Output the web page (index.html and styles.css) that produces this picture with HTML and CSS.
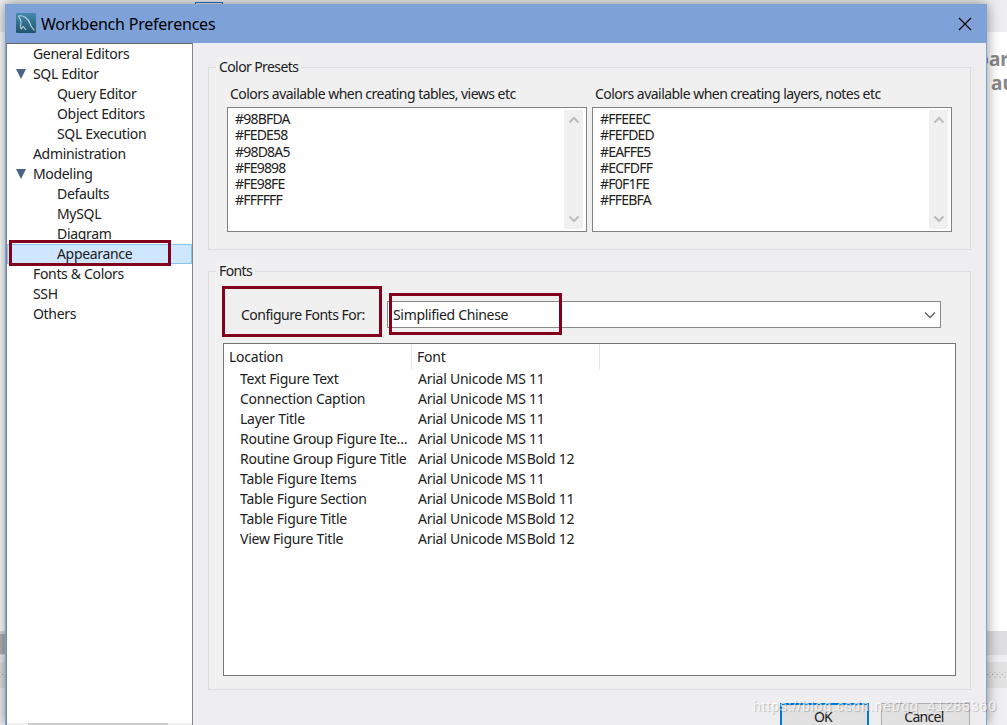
FILE: index.html
```
<!DOCTYPE html>
<html lang="en">
<head>
<meta charset="utf-8">
<title>Workbench Preferences</title>
<link rel="stylesheet" href="styles.css">
</head>
<body>
<div class="backdrop">
  <div class="back-top"></div>
  <div class="back-focus"></div>
  <div class="back-text"><div>oar</div><div class="second">au</div></div>
  <div class="back-bar dark"></div>
  <div class="back-bar dotted"></div>
  <div class="back-bar base"></div>
</div>
<div class="window">
  <header class="titlebar">
    <svg class="logo" width="20" height="20" viewBox="0 0 20 20">
      <defs><linearGradient id="sea" x2="0" y2="1"><stop stop-color="#438aad"/><stop offset="1" stop-color="#23536d"/></linearGradient></defs>
      <rect width="20" height="20" rx="1" fill="url(#sea)"/>
      <path d="M2.500 3C7 1.800 12 5 14 10.500L15 13L18.500 17.500M2.500 3C3 5 4.500 6 5 8.500C5.300 11 3.800 13 5 15.500C6 17 6 13.500 7.200 13.500L10 17" fill="none" stroke="#bdd5df" stroke-width="1.100"/>
    </svg>
    <h1>Workbench Preferences</h1>
    <svg class="close" width="14" height="14" viewBox="0 0 14 14"><path d="M1 1L13 13M13 1L1 13" stroke="#000" stroke-width="1.200"/></svg>
  </header>
  <div class="body">
    <nav class="tree">
      <ul>
        <li>General Editors</li>
        <li class="open">SQL Editor</li>
        <li class="child">Query Editor</li>
        <li class="child">Object Editors</li>
        <li class="child">SQL Execution</li>
        <li>Administration</li>
        <li class="open">Modeling</li>
        <li class="child">Defaults</li>
        <li class="child">MySQL</li>
        <li class="child">Diagram</li>
        <li class="child selected">Appearance</li>
        <li>Fonts &amp; Colors</li>
        <li>SSH</li>
        <li>Others</li>
      </ul>
      <div class="hscroll"><i></i></div>
    </nav>
    <main>
      <section class="group presets">
        <h2>Color Presets</h2>
        <div class="columns">
          <div class="column">
            <label>Colors available when creating tables, views etc</label>
            <div class="list">
              <div class="colors"><p>#98BFDA</p><p>#FEDE58</p><p>#98D8A5</p><p>#FE9898</p><p>#FE98FE</p><p>#FFFFFF</p></div>
              <div class="scroll">
                <svg width="12" height="8" viewBox="0 0 12 8"><path d="M1.500 6.500L6 2L10.500 6.500" /></svg>
                <svg width="12" height="8" viewBox="0 0 12 8"><path d="M1.500 1.500L6 6L10.500 1.500" /></svg>
              </div>
            </div>
          </div>
          <div class="column">
            <label>Colors available when creating layers, notes etc</label>
            <div class="list">
              <div class="colors"><p>#FFEEEC</p><p>#FEFDED</p><p>#EAFFE5</p><p>#ECFDFF</p><p>#F0F1FE</p><p>#FFEBFA</p></div>
              <div class="scroll">
                <svg width="12" height="8" viewBox="0 0 12 8"><path d="M1.500 6.500L6 2L10.500 6.500" /></svg>
                <svg width="12" height="8" viewBox="0 0 12 8"><path d="M1.500 1.500L6 6L10.500 1.500" /></svg>
              </div>
            </div>
          </div>
        </div>
      </section>
      <section class="group fonts">
        <h2>Fonts</h2>
        <div class="picker">
          <label>Configure Fonts For:</label>
          <div class="combo"><span>Simplified Chinese</span>
            <svg width="12" height="8" viewBox="0 0 12 8"><path d="M1 1.500L6 6.500L11 1.500" /></svg>
          </div>
        </div>
        <div class="table">
          <div class="row head"><span>Location</span><span>Font</span></div>
          <div class="row"><span>Text Figure Text</span><span>Arial Unicode MS 11</span></div>
          <div class="row"><span>Connection Caption</span><span>Arial Unicode MS 11</span></div>
          <div class="row"><span>Layer Title</span><span>Arial Unicode MS 11</span></div>
          <div class="row"><span>Routine Group Figure Ite...</span><span>Arial Unicode MS 11</span></div>
          <div class="row"><span>Routine Group Figure Title</span><span>Arial Unicode MS<b></b>Bold 12</span></div>
          <div class="row"><span>Table Figure Items</span><span>Arial Unicode MS 11</span></div>
          <div class="row"><span>Table Figure Section</span><span>Arial Unicode MS<b></b>Bold 11</span></div>
          <div class="row"><span>Table Figure Title</span><span>Arial Unicode MS<b></b>Bold 12</span></div>
          <div class="row"><span>View Figure Title</span><span>Arial Unicode MS<b></b>Bold 12</span></div>
        </div>
      </section>
      <footer><button class="primary">OK</button><button>Cancel</button></footer>
    </main>
  </div>
</div>
<div class="mark mark-tree"></div>
<div class="mark mark-label"></div>
<div class="mark mark-value"></div>
<div class="watermark">https://blog.csdn.net/qq_41285360</div>
</body>
</html>
```
FILE: styles.css
```
* { box-sizing: border-box; }
body { margin: 0; width: 1007px; height: 725px; overflow: hidden; position: relative; background: #fff; color: #202020; font: 14px/20px "Noto Sans", sans-serif; }
h1, h2, p, ul { margin: 0; padding: 0; font-weight: normal; list-style: none; }

.backdrop { position: absolute; inset: 0; overflow: hidden; }
.back-top { height: 32px; background: #eeeef0; }
.back-focus { position: absolute; left: 195px; top: 2px; width: 28px; height: 10px; border: 1px solid #1979ca; }
.back-text { position: absolute; left: 977px; top: 47px; color: #888; font: bold 19px/24px "Noto Sans", sans-serif; }
.back-text .second { margin-left: 14px; }
.back-bar { position: absolute; left: 0; width: 100%; }
.dark { top: 631px; height: 24px; background: #dedee0; }
.dark::before { content: ""; display: block; width: 6px; height: 20px; margin-top: 3px; background: #b5b5b5; }
.dotted { top: 655px; height: 33px; background: #e2e2e2; border-top: 7px solid #f0f0f2; }
.dotted::after { content: ""; display: block; height: 7px; margin-top: 10px; background: radial-gradient(circle, #999 0.8px, transparent 1px) 0 0 / 5px 5px, radial-gradient(circle, #999 0.8px, transparent 1px) 2.5px 2.5px / 5px 5px; }
.base { top: 688px; height: 37px; background: #f0f0f2; }

.window { position: relative; width: 982px; height: 721px; margin: 4px 0 0 5px; display: flex; flex-direction: column; background: #eeeef0; border: solid #7ea1d7; border-width: 0 1px; box-shadow: 0 0 12px rgba(0,0,0,.45); }
.titlebar { height: 39px; background: #7ea1d7; display: flex; align-items: center; padding: 0 14px 0 10px; }
.titlebar h1 { flex: 1; margin-left: 5px; font-size: 16px; letter-spacing: -.22px; color: #000; }
.logo { margin-top: -1px; }
.body { flex: 1; min-height: 0; display: flex; }
.tree { width: 187px; margin-right: 1px; border: 1px solid #83858c; border-top-color: #666; border-bottom: 0; background: #fff; display: flex; flex-direction: column; justify-content: space-between; }
.tree li { height: 20px; padding-left: 26px; line-height: 20px; position: relative; white-space: nowrap; letter-spacing: -.33px; }
.tree .child { padding-left: 50px; }
.tree .selected { background: #cfe6ff; border: 1px solid #86c6ea; line-height: 18px; padding-left: 49px; }
.tree .open::before { content: ""; position: absolute; left: 9px; top: 5px; border: solid transparent; border-width: 10px 5.500px 0; border-top-color: #4a6388; }
.hscroll { height: 2px; background: #f0f0f0; padding-left: 21px; }
.hscroll i { display: block; width: 140px; height: 2px; background: #cdcdcd; }

main { flex: 1; padding: 24px 15px 0 14px; display: flex; flex-direction: column; }
.group { flex-shrink: 0; border: 1px solid #dcdcdf; background: #f0f0f0; }
.group h2 { width: max-content; height: 20px; margin: -11px 0 0 7px; padding: 0 3px; background: #f0f0f0; font-size: 14px; letter-spacing: -.6px; }
.presets { height: 183px; }
.columns { display: flex; gap: 5px; padding: 7px 18px 0; }
.column { width: 360px; }
.column label { display: block; height: 23px; padding-left: 3px; letter-spacing: -.53px; white-space: nowrap; }
.list { height: 125px; border: 1px solid #828282; background: #fff; display: flex; padding: 2px; }
.colors { flex: 1; padding: 1px 0 0 5px; letter-spacing: -.8px; line-height: 16.300px; }
.colors p { height: 16.300px; }
.scroll { width: 19px; margin-right: 1px; background: #f0f0f0; display: flex; flex-direction: column; justify-content: space-between; align-items: center; padding: 6px 0; }
.scroll path { fill: none; stroke: #bdbdbd; stroke-width: 2; }
.fonts { margin-top: 21px; height: 419px; }
.picker { height: 62px; padding: 20px 29px 0 32px; display: flex; }
.picker label { width: 146px; line-height: 28px; letter-spacing: -.5px; white-space: nowrap; }
.combo { flex: 1; height: 27px; border: 1px solid #8a8a8a; background: #fff; display: flex; justify-content: space-between; align-items: center; padding: 0 4px 0 5px; letter-spacing: -.33px; }
.combo path { fill: none; stroke: #666; stroke-width: 1.500; }
.table { height: 333px; margin: 0 14px; border: 1px solid #747474; background: #fff; }
.row { display: grid; grid-template-columns: 188px 188px; height: 20px; line-height: 20px; letter-spacing: -.25px; }
.row span { padding-left: 6px; white-space: nowrap; }
.row span:first-child { padding-left: 16px; letter-spacing: -.25px; }
.row.head { height: 25px; line-height: 25px; }
.row.head span { padding-left: 5px; border-right: 1px solid #e3e3e3; }
.row b { display: inline-block; width: 1px; }
footer { display: flex; justify-content: flex-end; gap: 12px; padding: 13px 1px 0 0; }
button { width: 89px; height: 31px; flex-shrink: 0; border: 1px solid #adadad; background: #e1e1e1; color: #202020; font: 14px/20px "Noto Sans", sans-serif; letter-spacing: -.7px; padding: 0 3px 4px 0; }
button.primary { border: 2px solid #0078d7; }
.mark { position: absolute; border: 3px solid #83001d; }
.mark-tree { left: 9px; top: 240px; width: 162px; height: 26px; }
.mark-label { left: 222px; top: 286px; width: 160px; height: 51px; }
.mark-value { left: 389px; top: 293px; width: 173px; height: 42px; }
.watermark { position: absolute; left: 753px; top: 696px; font: 14px/20px "Liberation Sans", sans-serif; letter-spacing: .88px; white-space: nowrap; color: rgba(255,255,255,.72); text-shadow: 1px 1px 1px rgba(0,0,0,.22); }
```
